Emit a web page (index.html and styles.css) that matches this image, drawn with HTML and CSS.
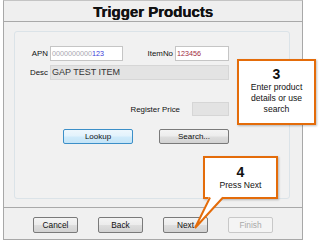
FILE: index.html
```html
<!DOCTYPE html>
<html>
<head>
<meta charset="utf-8">
<link rel="stylesheet" href="styles.css">
</head>
<body>
<div class="window">
  <div class="title">Trigger Products</div>
  <div class="body">
    <div class="group">
      <div class="row r1">
        <span class="lbl apn-l">APN</span>
        <div class="input apn"><span class="dim">0000000000</span><span class="blue">123</span></div>
        <span class="lbl item-l">ItemNo</span>
        <div class="input item"><span class="red">123456</span></div>
      </div>
      <div class="row r2">
        <span class="lbl apn-l">Desc</span>
        <div class="field desc">GAP TEST ITEM</div>
      </div>
      <div class="row r3">
        <span class="lbl">Register Price</span>
        <div class="field price"></div>
      </div>
      <div class="row r4">
        <div class="btn default lookup">Lookup</div>
        <div class="btn search">Search...</div>
      </div>
    </div>
  </div>
  <div class="footer">
    <div class="btn">Cancel</div>
    <div class="btn">Back</div>
    <div class="btn">Next</div>
    <div class="btn disabled">Finish</div>
  </div>
</div>

<div class="callout c3">
  <div class="num">3</div>
  <div class="txt">Enter product<br>details or use<br>search</div>
</div>

<div class="callout c4">
  <div class="num">4</div>
  <div class="txt">Press Next</div>
</div>
<svg class="tail" width="40" height="40" viewBox="190 192 40 40">
  <polygon points="209.5,195.5 224,195.5 195,228" fill="#fff"/>
  <polyline points="210,197.5 195,228 223,197.5" fill="none" stroke="#e46c0a" stroke-width="2" stroke-linejoin="miter"/>
</svg>
</body>
</html>
```
FILE: styles.css
```css
html, body {
  margin: 0;
  padding: 0;
  background: #ffffff;
  font-family: "Liberation Sans", Arial, sans-serif;
  color: #1a1a1a;
}

.window {
  box-sizing: border-box;
  margin-left: 3px;
  width: 300px;
  height: 240px;
  border: 1px solid #a8a8a8;
  border-top-color: #c4c4c4;
  background: #f0f0f0;
  display: flex;
  flex-direction: column;
}

.title {
  box-sizing: border-box;
  height: 21px;
  padding-top: 2px;
  line-height: 18px;
  border-bottom: 1px solid #a9a9a9;
  text-align: center;
  font-weight: bold;
  font-size: 15px;
  color: #111;
  text-shadow: 0.4px 0 0 #111;
  background: #efefef;
}

.body {
  height: 186px;
  box-sizing: border-box;
  padding: 9px 0 0 10px;
}

.group {
  box-sizing: border-box;
  width: 276px;
  height: 168px;
  border: 1px solid #dbe3e8;
  border-radius: 3px;
  background: #f1f1f1;
  padding-top: 14px;
}

.row {
  display: flex;
  align-items: center;
  width: 214px;
}
.r1 { height: 15px; }
.r2 { height: 15px; margin-top: 4px; }
.r3 { height: 14px; margin-top: 22px; justify-content: flex-end; }
.r4 { height: 15px; margin-top: 13px; }

.lbl {
  font-size: 7.9px;
  color: #111;
  white-space: nowrap;
}
.apn-l {
  width: 33px;
  margin-right: 2px;
  text-align: right;
}
.item-l {
  width: 50px;
  margin-right: 2px;
  text-align: right;
}

.input {
  box-sizing: border-box;
  height: 15px;
  border: 1px solid #c5c5c5;
  background: #fff;
  font-size: 7.2px;
  line-height: 13px;
  padding-left: 1px;
  white-space: nowrap;
}
.apn { width: 73px; }
.item { width: 54px; }
.dim { color: #a8a8b0; }
.blue { color: #3a3ad8; }
.red { color: #a02a40; }

.field {
  box-sizing: border-box;
  border: 1px solid #d6d6d6;
  background: #e3e3e3;
}
.desc {
  width: 179px;
  height: 15px;
  font-size: 9px;
  line-height: 13px;
  padding-left: 1px;
  color: #333;
}
.price {
  width: 37px;
  height: 14px;
  margin-left: 12px;
}

.btn {
  box-sizing: border-box;
  width: 45px;
  height: 16px;
  border: 1px solid #7a7a7a;
  border-radius: 2px;
  background: linear-gradient(#f4f4f4 0%, #ececec 48%, #dedede 52%, #d2d2d2 100%);
  font-size: 8.3px;
  line-height: 14px;
  text-align: center;
  color: #111;
}
.lookup, .search {
  width: 70px;
  height: 15px;
  line-height: 13px;
  font-size: 8px;
}
.lookup { margin-left: 48px; }
.search { margin-left: 26px; }
.default {
  border-color: #3c8fc8;
  background: linear-gradient(#eef7fd 0%, #e2f2fc 48%, #d0ebfb 52%, #c4e4f7 100%);
}
.disabled {
  border-color: #c8c8c8;
  background: #f4f4f4;
  color: #a9a9a9;
}

.footer {
  box-sizing: border-box;
  height: 32px;
  border-top: 1px solid #a9a9a9;
  padding: 9px 0 0 29px;
  display: flex;
  gap: 20px;
}

.callout {
  position: absolute;
  box-sizing: border-box;
  border: 2px solid #e46c0a;
  background: #ffffff;
  text-align: center;
  box-shadow: 1px 1px 2px rgba(0,0,0,0.25);
  color: #111;
}
.c3 {
  left: 237px;
  top: 59px;
  width: 79px;
  height: 66px;
  padding-top: 5px;
}
.c4 {
  left: 203px;
  top: 156px;
  width: 75px;
  height: 43px;
  padding-top: 6px;
}
.num {
  font-size: 14px;
  font-weight: bold;
  line-height: 16px;
}
.txt {
  font-size: 8.6px;
  line-height: 11px;
}
.tail {
  position: absolute;
  left: 190px;
  top: 192px;
}
```
